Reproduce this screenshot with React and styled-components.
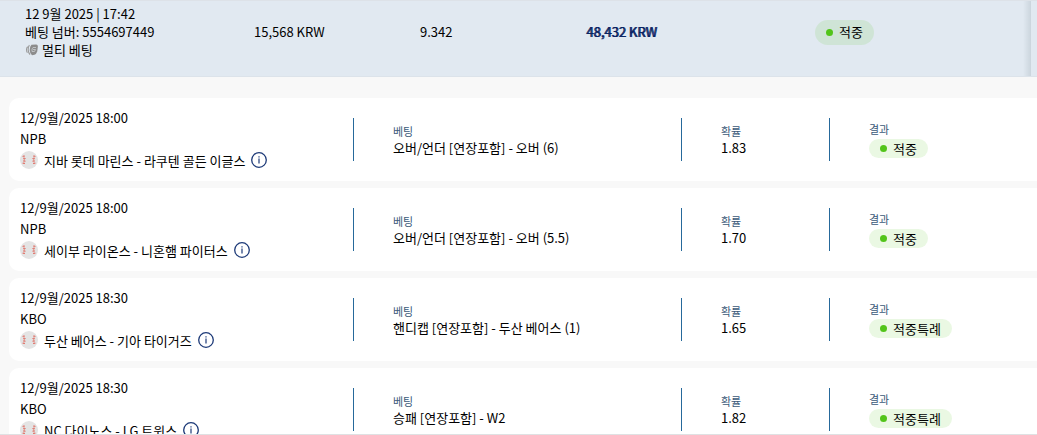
import React from 'react';
import styled, { createGlobalStyle } from 'styled-components';

const GlobalStyle = createGlobalStyle`
    * {
        box-sizing: border-box;
    }

    body {
        margin: 0;
        background: #f8f8f8;
        color: #000;
        font-family: 'Noto Sans CJK KR', 'Noto Sans', sans-serif;
        font-size: 13px;
        line-height: 18px;
    }
`;

const Page = styled.main`
    height: 100vh;
    overflow: hidden;
    border-bottom: 1px solid #dfe1e3;
`;

const Summary = styled.header`
    display: flex;
    border-top: 1px solid #dde2e8;
    border-bottom: 1px solid #dce3ea;
    background: #e1e9f1;
`;

const SummaryGrid = styled.div`
    flex: 1;
    display: grid;
    grid-template-columns: 229fr 166fr 166fr 229fr 200fr;
    align-items: center;
    padding: 4px 8px 17px 25px;
    white-space: nowrap;
`;

const SummaryEdge = styled.div`
    width: 14px;
    background: linear-gradient(
        to right,
        #e1e9f1 0,
        #cbd5dd 8px,
        #e1e9f1 8px
    );
`;

const BetType = styled.div`
    display: flex;
    align-items: center;
    gap: 3px;
`;

const Payout = styled.strong`
    color: #0a2463;
    font-weight: 400;
    text-shadow: 1px 0 #0a2463;
`;

const Status = styled.span`
    display: inline-flex;
    align-items: center;
    gap: 6px;
    height: ${props => (props.$large ? 25 : 19)}px;
    padding: 0 11px;
    border-radius: 13px;
    background: rgba(82, 196, 26, 0.12);

    &::before {
        content: '';
        width: 7px;
        height: 7px;
        border-radius: 50%;
        background: #52c41a;
    }
`;

const List = styled.ul`
    display: flex;
    flex-direction: column;
    gap: 7px;
    margin: 0;
    padding: 21px 0 0 9px;
    list-style: none;
`;

const Card = styled.li`
    display: grid;
    grid-template-columns: 333fr 328fr 148fr 208fr;
    padding: 9px 0 10px 11px;
    border-radius: 10px 0 0 10px;
    background: #fff;
    white-space: nowrap;
`;

const Event = styled.div`
    line-height: 21px;
`;

const Teams = styled.div`
    display: flex;
    align-items: center;
    gap: 6px;
    height: 22px;
`;

const InfoButton = styled.button`
    display: flex;
    padding: 0;
    border: 0;
    background: none;
    color: #1d3a78;
    cursor: pointer;
`;

const Field = styled.div`
    display: flex;
    flex-direction: column;
    align-items: flex-start;
    justify-content: center;
    gap: ${props => props.$gap || 0}px;
    height: 43px;
    margin: 11px 0 10px;
    padding-left: 39px;
    border-left: 1px solid #26699b;
    line-height: 17px;
`;

const Label = styled.span`
    color: #3b5a7a;
    font-size: 11px;
    line-height: 16px;
`;

const bets = [
    {
        date: '12/9월/2025 18:00',
        league: 'NPB',
        teams: '지바 롯데 마린스 - 라쿠텐 골든 이글스',
        bet: '오버/언더 [연장포함] - 오버 (6)',
        odds: '1.83',
        result: '적중',
    },
    {
        date: '12/9월/2025 18:00',
        league: 'NPB',
        teams: '세이부 라이온스 - 니혼햄 파이터스',
        bet: '오버/언더 [연장포함] - 오버 (5.5)',
        odds: '1.70',
        result: '적중',
    },
    {
        date: '12/9월/2025 18:30',
        league: 'KBO',
        teams: '두산 베어스 - 기아 타이거즈',
        bet: '핸디캡 [연장포함] - 두산 베어스 (1)',
        odds: '1.65',
        result: '적중특례',
    },
    {
        date: '12/9월/2025 18:30',
        league: 'KBO',
        teams: 'NC 다이노스 - LG 트윈스',
        bet: '승패 [연장포함] - W2',
        odds: '1.82',
        result: '적중특례',
    },
];

const MultiIcon = () => (
    <svg width="14" height="12" viewBox="0 0 14 12" aria-hidden="true">
        <path
            d="M2.6 2.6C1.2 4 1.2 7 2.4 8.8M4.4 1.2C2.6 3.4 2.8 8 5 10.6"
            fill="none"
            stroke="#9a9a9a"
            strokeWidth="1.1"
        />
        <path
            d="M6.5.8 11.2.5Q13 .7 12.9 2.4L12.2 7.6Q11.5 10 9.5 10.8L7 11.3Q4.8 9.4 4.7 6 4.8 2 6.5.8Z"
            fill="#8c8c8c"
        />
        <path
            d="M11 3.5H8L7 5V7.5H9.5L10.5 5.5H8"
            fill="none"
            stroke="#c3c7ca"
            strokeWidth=".9"
        />
    </svg>
);

const BaseballIcon = () => (
    <svg width="18" height="18" viewBox="0 0 18 18" aria-hidden="true">
        <circle cx="9" cy="9" r="9" fill="#e4e4e4" />
        <g fill="none" stroke="#e0786f">
            <path
                d="M3.5 4.5Q5.7 9 3.5 13M14.5 4.5Q12.3 9 14.5 13"
                strokeWidth=".6"
            />
            <path d="M2.5 5.4 5 5M3 7.8 5.6 7.5M3 9.9 5.6 10.2M2.5 12.2 5 12.6M15.5 5.4 13 5M15 7.8 12.4 7.5M15 9.9 12.4 10.2M15.5 12.2 13 12.6" />
        </g>
    </svg>
);

const InfoIcon = () => (
    <svg width="16" height="16" viewBox="0 0 16 16" aria-hidden="true">
        <circle
            cx="8"
            cy="8"
            r="7.3"
            fill="none"
            stroke="currentColor"
            strokeWidth="1.3"
        />
        <path
            d="M8 4.3V5.6M7.4 7.2H8V11.5"
            fill="none"
            stroke="currentColor"
            strokeWidth="1.2"
        />
    </svg>
);

const BetCard = ({ date, league, teams, bet, odds, result }) => (
    <Card>
        <Event>
            <div>{date}</div>
            <div>{league}</div>
            <Teams>
                <BaseballIcon />
                {teams}
                <InfoButton type="button" aria-label={teams}>
                    <InfoIcon />
                </InfoButton>
            </Teams>
        </Event>
        <Field>
            <Label>베팅</Label>
            {bet}
        </Field>
        <Field>
            <Label>확률</Label>
            {odds}
        </Field>
        <Field $gap={2}>
            <Label>결과</Label>
            <Status>{result}</Status>
        </Field>
    </Card>
);

export default function App() {
    return (
        <>
            <GlobalStyle />
            <Page>
                <Summary>
                    <SummaryGrid>
                        <div>
                            <div>12 9월 2025 | 17:42</div>
                            <div>베팅 넘버: 5554697449</div>
                            <BetType>
                                <MultiIcon />
                                멀티 베팅
                            </BetType>
                        </div>
                        <span>15,568 KRW</span>
                        <span>9.342</span>
                        <Payout>48,432 KRW</Payout>
                        <div>
                            <Status $large>적중</Status>
                        </div>
                    </SummaryGrid>
                    <SummaryEdge />
                </Summary>
                <List>
                    {bets.map(item => (
                        <BetCard key={item.teams} {...item} />
                    ))}
                </List>
            </Page>
        </>
    );
}
